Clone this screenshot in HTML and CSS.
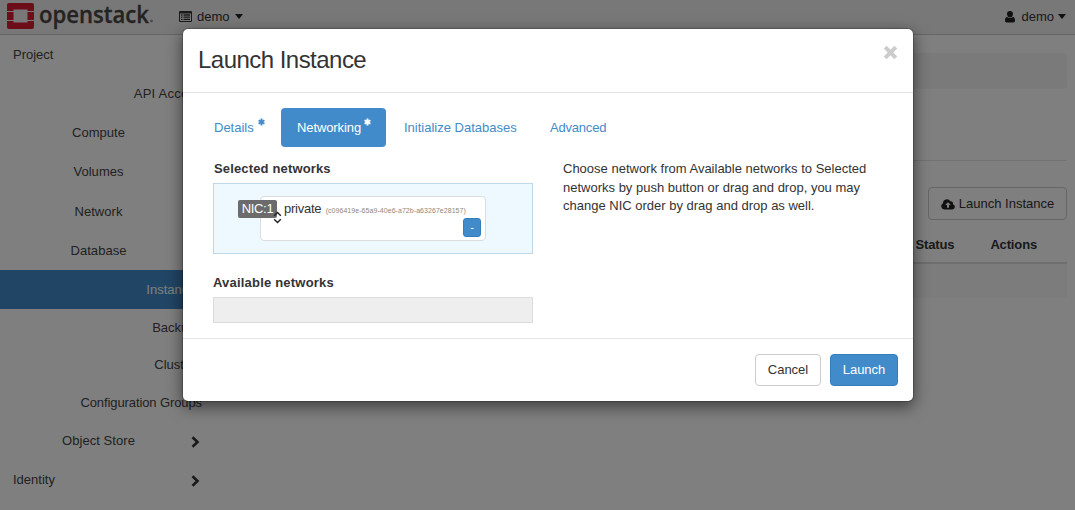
FILE: index.html
```html
<!DOCTYPE html>
<html lang="en">
<head>
<meta charset="utf-8">
<title>Launch Instance</title>
<link rel="stylesheet" href="styles.css">
</head>
<body>
<div class="page">
  <header class="navbar">
    <svg class="brand" width="150" height="34" viewBox="0 0 150 34">
      <g fill="#da1a32">
        <path d="M2 3h23a2 2 0 0 1 2 2v6h-6.500v-1.500h-14V11H0V5a2 2 0 0 1 2-2z"/>
        <path d="M0 12h6.500v8H0zM20.500 12H27v8h-6.500z"/>
        <path d="M0 21h6.500v1.500h14V21H27v6a2 2 0 0 1-2 2H2a2 2 0 0 1-2-2z"/>
      </g>
      <text class="wordmark" x="32" y="22.500" textLength="110" lengthAdjust="spacingAndGlyphs">openstack</text>
      <circle cx="144.500" cy="21" r="1.400" fill="#999"/>
    </svg>
    <div class="picker">
      <svg width="13" height="11" viewBox="0 0 13 11"><path fill="#333" fill-rule="evenodd" d="M1 0h11a1 1 0 0 1 1 1v9a1 1 0 0 1-1 1H1a1 1 0 0 1-1-1V1a1 1 0 0 1 1-1zM1 2.500v7.500h11V2.500z"/><path stroke="#333" stroke-width="1.300" d="M2 4h1.500M4.500 4H11M2 6.200h1.500M4.500 6.200H11M2 8.400h1.500M4.500 8.400H11"/></svg>
      <span>demo</span><i class="caret"></i>
    </div>
    <div class="picker user">
      <svg width="10" height="12" viewBox="0 0 10 12"><path fill="#222" d="M5 0a3 3 0 0 1 3 3c0 2-1.300 3.400-3 3.400S2 5 2 3a3 3 0 0 1 3-3zM2.200 5.700C3 6.700 4 7.100 5 7.100s2-.4 2.800-1.400C9.400 6 10 7.600 10 9.600 10 11 9.200 11.500 8.300 11.500H1.700C.8 11.500 0 11 0 9.600 0 7.600.6 6 2.200 5.700z"/></svg>
      <span>demo</span><i class="caret"></i>
    </div>
  </header>
  <div class="content">
    <nav class="sidebar">
      <div class="item root">Project</div>
      <div class="item leaf api">API Access</div>
      <div class="item group">Compute</div>
      <div class="item group">Volumes</div>
      <div class="item group tall">Network</div>
      <div class="item group">Database</div>
      <div class="item leaf active">Instances</div>
      <div class="item leaf short">Backups</div>
      <div class="item leaf short">Clusters</div>
      <div class="item leaf mid">Configuration Groups</div>
      <div class="item group">Object Store<svg class="chevron" width="9" height="12" viewBox="0 0 9 12"><path d="M1.500 1.200 6.500 6l-5 4.800"/></svg></div>
      <div class="item root">Identity<svg class="chevron" width="9" height="12" viewBox="0 0 9 12"><path d="M1.500 1.200 6.500 6l-5 4.800"/></svg></div>
    </nav>
    <main class="main">
      <div class="breadcrumb"></div>
      <hr class="rule">
      <div class="toolbar">
        <button class="btn launch-open"><svg width="14" height="11" viewBox="0 0 14 11"><path fill="#222" fill-rule="evenodd" d="M3.300 10.500A3.300 3.300 0 0 1 2 4.300 3.900 3.900 0 0 1 9.300 2.300a2.200 2.200 0 0 1 2.600 2.900A2.700 2.700 0 0 1 11.300 10.500zM7 3.200 4.200 6.100H6v2.700h2V6.100h1.800z"/></svg>Launch Instance</button>
      </div>
      <div class="table-head"><span class="status">Status</span><span class="actions">Actions</span></div>
      <div class="table-row"></div>
    </main>
  </div>
</div>
<div class="backdrop">
  <section class="modal">
    <div class="modal-header">
      <h3 class="title">Launch Instance</h3>
      <svg class="close" width="15" height="15" viewBox="0 0 15 15"><path d="M2.200 2.200l10.600 10.600M12.800 2.200 2.200 12.800"/></svg>
    </div>
    <div class="modal-body">
      <div class="tabs">
        <a class="tab details">Details<svg class="star" width="7" height="8" viewBox="0 0 7 8"><path d="M3.500.5v7M.6 2.200l5.800 3.600M6.400 2.200.6 5.800"/></svg></a>
        <a class="tab current">Networking<svg class="star" width="7" height="8" viewBox="0 0 7 8"><path d="M3.500.5v7M.6 2.200l5.800 3.600M6.400 2.200.6 5.800"/></svg></a>
        <a class="tab databases">Initialize Databases</a>
        <a class="tab advanced">Advanced</a>
      </div>
      <div class="columns">
        <div class="networks">
          <h4 class="label">Selected networks</h4>
          <div class="dropzone selected">
            <div class="network">
              <span class="nic">NIC:1</span>
              <svg class="cursor" width="9" height="13" viewBox="0 0 9 13"><path d="M1.200 4.800 4.500 1.500l3.300 3.300M1.200 8.200l3.300 3.300 3.300-3.300"/></svg>
              <div class="network-name">private <small class="uuid">(c096419e-65a9-40e6-a72b-a63267e28157)</small></div>
              <button class="remove">-</button>
            </div>
          </div>
          <h4 class="label available-label">Available networks</h4>
          <div class="dropzone available"></div>
        </div>
        <p class="help">Choose network from Available networks to Selected<br>networks by push button or drag and drop, you may<br>change NIC order by drag and drop as well.</p>
      </div>
    </div>
    <div class="modal-footer">
      <button class="btn cancel">Cancel</button>
      <button class="btn primary">Launch</button>
    </div>
  </section>
</div>
</body>
</html>
```
FILE: styles.css
```css
* { box-sizing: border-box; }
body { margin: 0; width: 1075px; height: 510px; overflow: hidden; background: #fff; color: #333; font: 13px/18.5px "Liberation Sans", Arial, sans-serif; }
svg { display: block; flex: none; }
h3, h4, p { margin: 0; }
button { font: inherit; color: inherit; padding: 0; }
.page { width: 1075px; height: 510px; }
.navbar { height: 35px; display: flex; background: #f0f0f0; border-bottom: 1px solid #ccc; padding: 0 9px 0 7px; }
.brand { overflow: visible; }
.wordmark { font: 600 24px "Open Sans", "Noto Sans", sans-serif; fill: #4a4743; stroke: #4a4743; stroke-width: .3; }
.picker { display: flex; align-items: center; height: 33px; margin-left: 22px; }
.picker span { margin-left: 5px; padding-top: 1px; }
.caret { width: 0; height: 0; margin-left: 5px; border: 4px solid transparent; border-top: 5px solid #222; border-bottom: 0; }
.user { margin-left: auto; }
.user span { margin-left: 6px; }
.user .caret { margin-left: 4px; }
.content { display: flex; }
.sidebar { width: 225px; }
.item { height: 39px; display: flex; align-items: center; padding-top: 2px; color: #444; }
.root { padding-left: 13px; }
.leaf { justify-content: flex-end; padding-right: 23px; }
.api { letter-spacing: .25px; }
.group { position: relative; justify-content: center; padding-right: 28px; letter-spacing: .05px; }
.tall { height: 40px; }
.short { height: 37px; }
.mid { height: 38px; letter-spacing: -.1px; }
.active { width: 225px; background: #428bca; color: #fff; }
.chevron { margin-left: auto; margin-right: 25px; fill: none; stroke: #333; stroke-width: 2.6; }
.group .chevron { position: absolute; right: 0; }
.main { flex: 1; padding: 18px 8px 0 0; }
.breadcrumb { height: 36px; background: #f5f5f5; border-radius: 4px; }
.rule { height: 1px; margin: 71px 0 0; border: 0; background: #e5e5e5; }
.toolbar { display: flex; justify-content: flex-end; padding-top: 26px; }
.btn { display: flex; align-items: center; justify-content: center; height: 32px; padding-top: 1px; border: 1px solid #ccc; border-radius: 4px; background: #fff; }
.launch-open { width: 139px; height: 33px; gap: 4px; }
.table-head { height: 44px; display: flex; align-items: center; justify-content: flex-end; padding-top: 8px; border-bottom: 2px solid #ddd; font-weight: bold; letter-spacing: -.15px; }
.actions { margin: 0 30px 0 36px; }
.table-row { height: 34px; background: #f9f9f9; }
.backdrop { position: absolute; inset: 0; display: flex; justify-content: center; align-items: flex-start; padding: 28px 0 0 21px; background: rgba(0,0,0,.5); overflow: hidden; }
.modal { width: 732px; height: 374px; background: #fff; background-clip: padding-box; border: 1px solid rgba(0,0,0,.2); border-radius: 6px; box-shadow: 0 5px 15px rgba(0,0,0,.5); }
.modal-header { height: 64px; display: flex; justify-content: space-between; padding: 15px 15px 0; border-bottom: 1px solid #e5e5e5; }
.title { font-size: 24px; line-height: 32px; font-weight: normal; letter-spacing: -.53px; }
.close { margin-top: 1px; fill: none; stroke: #ccc; stroke-width: 4; }
.modal-body { height: 245px; padding: 15px 15px 0; }
.tabs { display: flex; height: 39px; color: #428bca; }
.tab { display: flex; align-items: center; padding: 2px 16px 0; border-radius: 4px; white-space: nowrap; }
.details { width: 83px; }
.current { width: 105px; background: #428bca; color: #fff; letter-spacing: -.1px; }
.databases { padding-left: 18px; width: 148px; }
.advanced { padding-left: 16px; letter-spacing: -.2px; }
.star { margin: -13px 0 0 4px; fill: none; stroke: currentColor; stroke-width: 1.9; }
.current .star { margin-left: 3px; }
.columns { display: flex; padding: 12px 15px 0; gap: 30px; }
.networks { width: 320px; }
.label { padding-left: 1px; font-size: 13px; line-height: 19px; height: 24px; letter-spacing: .15px; }
.dropzone { border: 1px solid #ddd; background: #eee; height: 26px; }
.selected { display: flex; height: 71px; border-color: #c0d8e5; background: #edf8ff; padding: 12px 46px; }
.network { position: relative; width: 226px; height: 45px; border: 1px solid #ddd; border-radius: 4px; background: #fff; padding: 3px 0 0 23px; }
.network-name { white-space: nowrap; letter-spacing: -.25px; }
.uuid { font-size: 7px; color: #91877c; margin-left: 1px; letter-spacing: .055px; }
.nic { position: absolute; left: -23px; top: 3px; width: 39px; height: 18px; border-radius: 2px; background: #6b6b6b; color: #fff; text-align: center; line-height: 18px; letter-spacing: -.3px; }
.cursor { position: absolute; left: 12px; top: 14px; fill: none; stroke: #222; stroke-width: 1.4; }
.remove { position: absolute; right: 4px; bottom: 3px; width: 18px; height: 19px; border: 1px solid #357ebd; border-radius: 3px; background: #428bca; color: #fff; font-size: 11px; line-height: 15px; }
.available-label { margin-top: 19px; padding-left: 0; letter-spacing: .2px; }
.help { padding-top: 1px; white-space: nowrap; }
.modal-footer { display: flex; justify-content: flex-end; gap: 9px; height: 63px; padding: 15px 15px 0; border-top: 1px solid #e5e5e5; }
.cancel { width: 66px; }
.primary { width: 68px; background: #428bca; border-color: #357ebd; color: #fff; }
```
